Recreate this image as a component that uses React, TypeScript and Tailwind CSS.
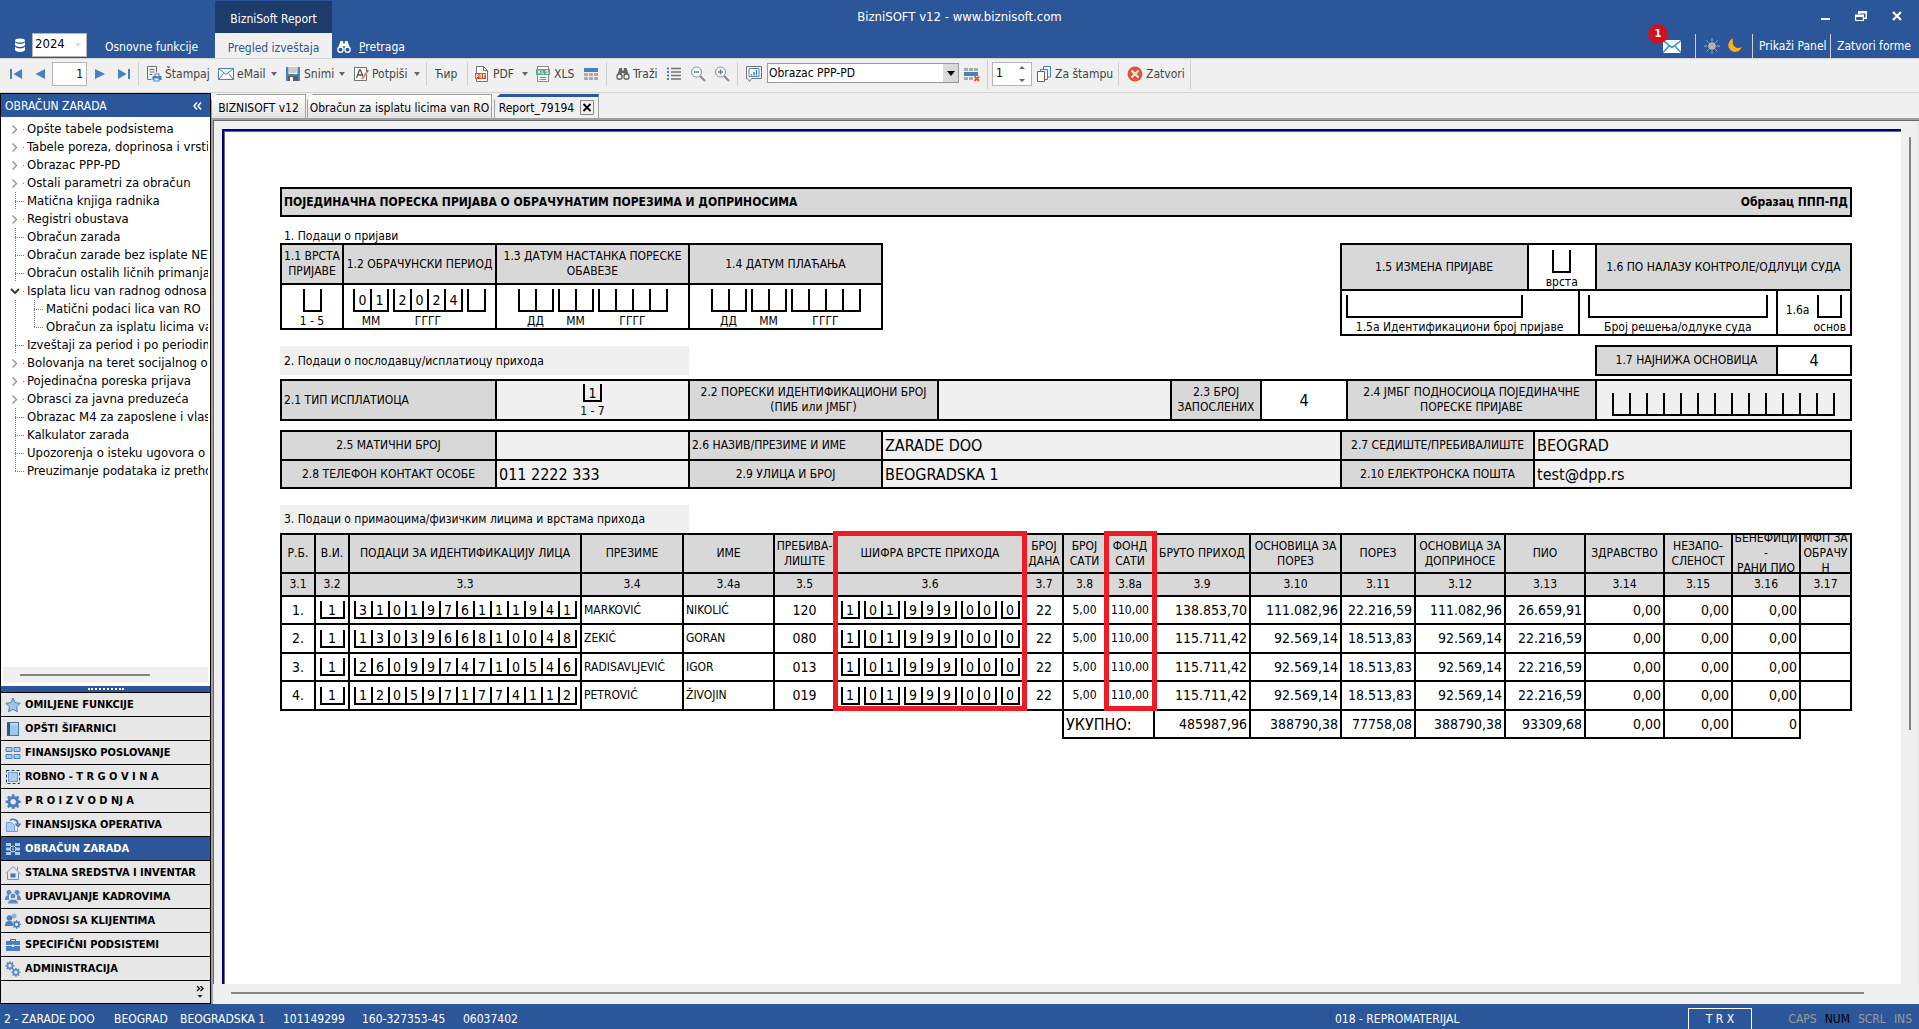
import React from 'react'
import clsx from 'clsx'

type IconProps = { className?: string }

const treeItems = [
  { label: 'Opšte tabele podsistema', kind: 'closed' },
  { label: 'Tabele poreza, doprinosa i vrsti', kind: 'closed' },
  { label: 'Obrazac PPP-PD', kind: 'closed' },
  { label: 'Ostali parametri za obračun', kind: 'closed' },
  { label: 'Matična knjiga radnika', kind: 'leaf' },
  { label: 'Registri obustava', kind: 'closed' },
  { label: 'Obračun zarada', kind: 'leaf' },
  { label: 'Obračun zarade bez isplate NET', kind: 'leaf' },
  { label: 'Obračun ostalih ličnih primanja', kind: 'leaf' },
  { label: 'Isplata licu van radnog odnosa', kind: 'open' },
  { label: 'Matični podaci lica van RO', kind: 'child' },
  { label: 'Obračun za isplatu licima va', kind: 'lastChild' },
  { label: 'Izveštaji za period i po periodim', kind: 'leaf' },
  { label: 'Bolovanja na teret socijalnog os', kind: 'closed' },
  { label: 'Pojedinačna poreska prijava', kind: 'closed' },
  { label: 'Obrasci za javna preduzeća', kind: 'closed' },
  { label: 'Obrazac M4 za zaposlene i vlas', kind: 'leaf' },
  { label: 'Kalkulator zarada', kind: 'leaf' },
  { label: 'Upozorenja o isteku ugovora o r', kind: 'leaf' },
  { label: 'Preuzimanje podataka iz pretho', kind: 'last' },
]

const gear = 'M8 1.2l1.2 0 .4 2 1.5.6 1.7-1.1 1.5 1.5-1.1 1.7.6 1.5 2 .4v2l-2 .4-.6 1.5 1.1 1.7-1.5 1.5-1.7-1.1-1.5.6-.4 2h-2l-.4-2-1.5-.6-1.7 1.1-1.5-1.5 1.1-1.7-.6-1.5-2-.4v-2l2-.4.6-1.5-1.1-1.7 1.5-1.5 1.7 1.1 1.5-.6.4-2zM8.2 6a2.8 2.8 0 1 0 .01 0z'

const groups = [
  {
    label: 'OMILJENE FUNKCIJE',
    icon: <path d="M8 1l2.2 4.7 5 .6-3.7 3.5 1 5L8 12.3l-4.5 2.5 1-5L.8 6.3l5-.6z" fill="#9cc5ea" stroke="#4f7fb5" />,
  },
  {
    label: 'OPŠTI ŠIFARNICI',
    icon: (
      <>
        <rect x="2.5" y="1.5" width="11" height="13" fill="#9fcaf0" stroke="#4778ad" />
        <path d="M2 1.5h3v13H2z" fill="#34567d" />
        <path d="M6 3h7" stroke="#d8ecfb" />
      </>
    ),
  },
  {
    label: 'FINANSIJSKO POSLOVANJE',
    icon: (
      <g fill="#a9c9e6" stroke="#4f83b9">
        <path d="M1 2.5h6v4H1zM9 2.5h6v4H9zM1 9.5h6v4H1zM9 9.5h6v4H9z" />
      </g>
    ),
  },
  {
    label: 'ROBNO - T R G O V I N A',
    icon: (
      <>
        <rect x="3.5" y="3.5" width="9" height="9" fill="#a9cdf0" stroke="#6a9fd6" />
        <rect x="1.5" y="1.5" width="13" height="13" fill="none" stroke="#24405f" strokeDasharray="3 2" />
      </>
    ),
  },
  { label: 'P R O I Z V O D NJ A', icon: <path d={gear} fill="#4a80bd" fillRule="evenodd" /> },
  {
    label: 'FINANSIJSKA OPERATIVA',
    icon: (
      <>
        <path d="M1.5 5.5h5l3 3v6h-8z" fill="#a9cdf0" stroke="#6a9fd6" />
        <path d="M5 3.5c3-2.500 8-1 8 4M10.500 6.500l2.500 3 2.500-3" fill="none" stroke="#3f76b3" strokeWidth="1.500" />
        <path d="M9.500 14.500h3v-3" fill="none" stroke="#6a9fd6" />
      </>
    ),
  },
  {
    label: 'OBRAČUN ZARADA',
    active: true,
    icon: (
      <>
        <path d="M1 2h5v3H1zM1 6.500h4v3H1zM1 11h5v3H1zM10 2h5v3h-5zM11 6.500h4v3h-4zM10 11h5v3h-5z" fill="#a9cdf0" />
        <circle cx="8" cy="8" r="3" fill="#2b579a" stroke="#cfe3f7" />
        <path d="M8 6.500v3" stroke="#cfe3f7" />
      </>
    ),
  },
  {
    label: 'STALNA SREDSTVA I INVENTAR',
    icon: (
      <>
        <path d="M1 8.500L8 1.500l7 7M2.500 7.500v7h11v-7M12.500 5V1.500" fill="none" stroke="#6c93bd" />
        <path d="M5.500 8.500h5v4h-5z" fill="#3f76b3" />
      </>
    ),
  },
  {
    label: 'UPRAVLJANJE KADROVIMA',
    icon: (
      <g fill="#5b8cc2">
        <circle cx="4" cy="3.500" r="2.500" />
        <circle cx="12" cy="3.500" r="2.500" />
        <path d="M0 11c0-4 2-5 4-5v5zM16 11c0-4-2-5-4-5v5z" />
        <circle cx="8" cy="7" r="3" stroke="#e7e7e7" />
        <path d="M2.500 15c0-3 2-5 5.500-5s5.500 2 5.500 5z" stroke="#e7e7e7" />
      </g>
    ),
  },
  {
    label: 'ODNOSI SA KLIJENTIMA',
    icon: (
      <g fill="#4a80bd">
        <circle cx="9" cy="3" r="2.500" fill="#8fb5dc" />
        <circle cx="4.500" cy="5" r="2.800" />
        <path d="M0 13c0-4 1.500-5 4.500-5S8 9 8 13z" />
        <g transform="translate(7 6.500) scale(.56)">
          <path d={gear} fillRule="evenodd" />
        </g>
      </g>
    ),
  },
  {
    label: 'SPECIFIČNI PODSISTEMI',
    icon: (
      <>
        <path d="M1 4h14v4H1zM1 9h14v5H1z" fill="#4a80bd" />
        <path d="M5.500 4V2.500h5V4" fill="none" stroke="#35608f" />
        <path d="M7 7.500h2v2.500H7z" fill="#e7e7e7" />
      </>
    ),
  },
  {
    label: 'ADMINISTRACIJA',
    icon: (
      <g fill="#5b8cc2" fillRule="evenodd">
        <g transform="translate(0 -.5) scale(.6)">
          <path d={gear} />
        </g>
        <g transform="translate(6 6) scale(.6)">
          <path d={gear} />
        </g>
      </g>
    ),
  },
]

const columns = [
  { title: 'Р.Б.', code: '3.1', width: 'w-[34px]' },
  { title: 'В.И.', code: '3.2', width: 'w-[34px]' },
  { title: 'ПОДАЦИ ЗА ИДЕНТИФИКАЦИЈУ ЛИЦА', code: '3.3', width: 'w-[232px]' },
  { title: 'ПРЕЗИМЕ', code: '3.4', width: 'w-[102px]' },
  { title: 'ИМЕ', code: '3.4a', width: 'w-[91px]' },
  { title: 'ПРЕБИВА-\nЛИШТЕ', code: '3.5', width: 'w-[61px]' },
  { title: 'ШИФРА ВРСТЕ ПРИХОДА', code: '3.6', width: 'w-[190px]' },
  { title: 'БРОЈ\nДАНА', code: '3.7', width: 'w-[38px]' },
  { title: 'БРОЈ\nСАТИ', code: '3.8', width: 'w-[43px]' },
  { title: 'ФОНД\nСАТИ', code: '3.8a', width: 'w-[48px]' },
  { title: 'БРУТО ПРИХОД', code: '3.9', width: 'w-[96px]' },
  { title: 'ОСНОВИЦА ЗА\nПОРЕЗ', code: '3.10', width: 'w-[91px]' },
  { title: 'ПОРЕЗ', code: '3.11', width: 'w-[74px]' },
  { title: 'ОСНОВИЦА ЗА\nДОПРИНОСЕ', code: '3.12', width: 'w-[90px]' },
  { title: 'ПИО', code: '3.13', width: 'w-[80px]' },
  { title: 'ЗДРАВСТВО', code: '3.14', width: 'w-[79px]' },
  { title: 'НЕЗАПО-\nСЛЕНОСТ', code: '3.15', width: 'w-[68px]' },
  { title: 'БЕНЕФИЦИ\n-\nРАНИ ПИО', code: '3.16', width: 'w-[68px]' },
  { title: 'МФП ЗА\nОБРАЧУ\nН', code: '3.17', width: 'w-[51px]' },
]

const people = [
  {
    id: '3101976111941', surname: 'MARKOVIĆ', name: 'NIKOLIĆ', place: '120',
    amounts: ['138.853,70', '111.082,96', '22.216,59', '111.082,96', '26.659,91', '0,00', '0,00', '0,00', ''],
  },
  {
    id: '1303966810048', surname: 'ZEKIĆ', name: 'GORAN', place: '080',
    amounts: ['115.711,42', '92.569,14', '18.513,83', '92.569,14', '22.216,59', '0,00', '0,00', '0,00', ''],
  },
  {
    id: '2609974710546', surname: 'RADISAVLJEVIĆ', name: 'IGOR', place: '013',
    amounts: ['115.711,42', '92.569,14', '18.513,83', '92.569,14', '22.216,59', '0,00', '0,00', '0,00', ''],
  },
  {
    id: '1205971774112', surname: 'PETROVIĆ', name: 'ŽIVOJIN', place: '019',
    amounts: ['115.711,42', '92.569,14', '18.513,83', '92.569,14', '22.216,59', '0,00', '0,00', '0,00', ''],
  },
]

const totals = ['485987,96', '388790,38', '77758,08', '388790,38', '93309,68', '0,00', '0,00', '0']

function Svg({ className, children }: IconProps & { children: React.ReactNode }) {
  return (
    <svg viewBox="0 0 16 16" className={clsx('h-4 w-4 shrink-0', className)} aria-hidden="true">
      {children}
    </svg>
  )
}

function Binoculars({ className }: IconProps) {
  return (
    <Svg className={className}>
      <path d="M4 1h3v3h2V1h3l2.500 7.500h-5V7h-3v1.500h-5z" fill="currentColor" />
      <circle cx="4" cy="11" r="3" fill="none" stroke="currentColor" strokeWidth="1.500" />
      <circle cx="12" cy="11" r="3" fill="none" stroke="currentColor" strokeWidth="1.500" />
    </Svg>
  )
}

function Caret({ className }: IconProps) {
  return (
    <svg viewBox="0 0 6 4" className={clsx('h-1 w-1.5 shrink-0', className)} aria-hidden="true">
      <path d="M0 0h6L3 4z" fill="currentColor" />
    </svg>
  )
}

function Separator() {
  return <div className="h-6 w-px shrink-0 bg-[#d0d0d0]" />
}

function ToolButton({ icon, label, caret, className }: { icon?: React.ReactNode; label?: string; caret?: boolean; className?: string }) {
  return (
    <button className={clsx('flex h-6 shrink-0 items-center gap-[3px] whitespace-nowrap text-[#444]', className)}>
      {icon}
      {label}
      {caret && <Caret className="ml-auto text-[#666]" />}
    </button>
  )
}

function NavArrow({ d, name }: { d: string; name: string }) {
  return (
    <button aria-label={name} className="flex h-6 w-[21px] shrink-0 items-center justify-center">
      <Svg>
        <path d={d} fill="#4a80bd" />
      </Svg>
    </button>
  )
}

function TitleBar() {
  return (
    <header className="flex h-[58px] shrink-0 bg-[#2b579a] text-white">
      <div className="flex w-[215px] shrink-0 items-end">
        <Svg className="mb-[5px] ml-[12px]">
          <g fill="#fff">
            <ellipse cx="8" cy="3.500" rx="5" ry="2" />
            <path d="M3 5c1 2.500 9 2.500 10 0v3c-1 2.500-9 2.500-10 0zM3 9.500c1 2.500 9 2.500 10 0V13c-1 2.500-9 2.500-10 0z" />
          </g>
        </Svg>
        <div className="relative mb-px ml-1 h-6 w-[55px]">
          <select aria-label="Godina" className="h-full w-full appearance-none border border-[#b5b5b5] bg-white px-[2px] pb-[3px] text-[13px] text-black">
            <option>2024</option>
          </select>
          <Caret className="absolute top-2.5 right-1.5 text-[#ddd]" />
        </div>
        <a href="#osnovne" className="mb-[3px] ml-[18px] whitespace-nowrap">Osnovne funkcije</a>
      </div>
      <div className="flex w-[117px] shrink-0 flex-col pt-px text-center">
        <div className="flex h-8 items-center justify-center bg-[#1e3c6b] pt-1">BizniSoft Report</div>
        <a href="#pregled" className="flex flex-1 items-center justify-center bg-[#f0f0f0] pt-1 text-[#2b579a]">Pregled izveštaja</a>
      </div>
      <a href="#pretraga" className="flex shrink-0 items-center gap-2 self-end pb-[3px] pl-[5px]">
        <Binoculars className="h-[14px] w-[14px]" />
        <span><u>P</u>retraga</span>
      </a>
      <h1 className="flex-1 pt-[9px] pr-[149px] text-center text-[13px]">BizniSOFT v12 - www.biznisoft.com</h1>
      <div className="flex w-[256px] shrink-0 flex-col">
        <div className="flex h-[34px] items-start justify-end gap-[20px] pt-[9px] pr-[14px]">
          <button aria-label="Umanji"><Svg><path d="M4 9h9v2H4z" fill="#fff" /></Svg></button>
          <button aria-label="Vrati">
            <Svg>
              <path d="M5 2h9v8h-3V8.500h1.500v-4H6.500V5H5zM2 5.500h9V12H2zM3.200 8v3h6.600V8z" fill="#fff" fillRule="evenodd" />
            </Svg>
          </button>
          <button aria-label="Zatvori"><Svg><path d="M4 3l8 8M12 3l-8 8" stroke="#fff" strokeWidth="2.200" /></Svg></button>
        </div>
        <div className="flex h-6 items-stretch whitespace-nowrap">
          <button aria-label="Poruke" className="relative w-[32px] shrink-0">
            <svg viewBox="0 0 18 13" className="h-[13px] w-[18px]" aria-hidden="true">
              <path d="M0 0h18v13H0z" fill="#fff" />
              <path d="M0 .5l9 7 9-7M0 12.500l6-6.500M18 12.500L12 6" fill="none" stroke="#2a8bd8" strokeWidth="1.400" />
            </svg>
            <span className="absolute -top-2.5 -left-[15px] flex h-5 w-5 items-center justify-center rounded-full bg-[#d0111f] text-[11px] font-bold">1</span>
          </button>
          <div className="flex w-[57px] shrink-0 items-center gap-[6px] border-l border-[#d0d0d0] px-2">
            <Svg>
              <path d="M8 0v16M0 8h16M2.500 2.500l11 11M13.500 2.500l-11 11" stroke="#a9b3c2" />
              <circle cx="8" cy="8" r="4.800" fill="#2b579a" />
              <circle cx="8" cy="8" r="3.800" fill="#b3b3b3" />
            </Svg>
            <Svg><path d="M6 2a6 6 0 1 0 8 8.500C9 12 5 7 6 2z" fill="#ffb117" stroke="#ffb117" strokeWidth="1.500" /></Svg>
          </div>
          <a href="#panel" className="flex w-[78px] shrink-0 items-center border-l border-[#d0d0d0] pl-1.5">Prikaži Panel</a>
          <a href="#forme" className="flex items-center border-l border-[#d0d0d0] pl-1.5">Zatvori forme</a>
        </div>
      </div>
    </header>
  )
}

function Toolbar() {
  return (
    <div className="flex h-[35px] shrink-0 items-center border-y border-[#d2d2d2] bg-[#f0f0f0] pb-[3px] pl-[5px]">
      <NavArrow name="Prva" d="M2 3h2v10H2zM14 3v10L5.500 8z" />
      <div className="w-[3px]" />
      <NavArrow name="Prethodna" d="M13 3v10L3.500 8z" />
      <input aria-label="Strana" defaultValue="1" className="ml-0.5 h-6 w-[35px] shrink-0 border border-[#b5b5b5] bg-white pr-[3px] text-right text-black" />
      <div className="w-[2px]" />
      <NavArrow name="Sledeća" d="M3 3v10l10-5z" />
      <div className="w-[3px]" />
      <NavArrow name="Poslednja" d="M2 3v10l8.500-5zM12 3h2v10h-2z" />
      <div className="w-[4px]" />
      <Separator />
      <ToolButton
        className="ml-[7px] w-[72px]"
        label="Štampaj"
        icon={
          <Svg>
            <path d="M1.500 13.500V.5h9v6M3.500 3.500h5M3.500 6h5M3.500 8.500h3M1.500 13.500h4" fill="none" stroke="#737373" />
            <path d="M8.500 7.500h5V10h2v4h-2v1.500h-6V14h-1v-4h2z" fill="#4a80bd" />
            <path d="M9.500 8.500h3V10h-3zM8.500 12.500h4v2h-4z" fill="#fff" />
          </Svg>
        }
      />
      <ToolButton
        className="w-[59px]"
        label="eMail"
        caret
        icon={
          <Svg>
            <path d="M.5 2.500h15v11H.5zl7.500 6 7.500-6M.5 13.500l5-6M15.500 13.500l-5-6" fill="#fff" stroke="#4a80bd" />
          </Svg>
        }
      />
      <ToolButton
        className="ml-[8px] w-[60px]"
        label="Snimi"
        caret
        icon={
          <Svg>
            <path d="M1 1h14v14H1z" fill="#4a80bd" />
            <path d="M3.500 0h9v8h-9z" fill="#fff" />
            <path d="M4 2h8M4 4h8M4 6h8" stroke="#999" />
            <path d="M3 10h10v5H3z" fill="#5c5c5c" />
            <path d="M5 11h3v4H5z" fill="#eee" />
          </Svg>
        }
      />
      <ToolButton
        className="ml-[8px] w-[67px]"
        label="Potpiši"
        caret
        icon={
          <Svg>
            <path d="M1.500 1.500h12v13h-12z" fill="#fff" stroke="#737373" />
            <path d="M3.500 12l3-8h1l3 8M5 9h4" fill="none" stroke="#555" strokeWidth="1.300" />
            <path d="M9 13l5-7" stroke="#e8926d" strokeWidth="2.200" />
            <path d="M14 6l1-2" stroke="#4a80bd" strokeWidth="2" />
          </Svg>
        }
      />
      <div className="w-[6px]" />
      <Separator />
      <ToolButton className="ml-[8px] w-[32px]" label="Ћир" />
      <Separator />
      <ToolButton
        className="ml-[6px] w-[54px]"
        label="PDF"
        caret
        icon={
          <Svg>
            <path d="M2.500.5h7l4 4v11h-11zM9.500.5v4h4" fill="#fff" stroke="#737373" />
            <path d="M1 7h11v6H1z" fill="#db4a2b" />
            <path d="M2.500 12V8.500h1.500v2H2.500M6 8.500v3h1.500v-3zM9.500 12V8.500h2M9.500 10h1.500" fill="none" stroke="#fff" strokeWidth=".8" />
          </Svg>
        }
      />
      <ToolButton
        className="ml-[7px] w-[48px]"
        label="XLS"
        icon={
          <Svg>
            <path d="M2.500 15.500v-15h11v15zM4.500 11.500h7M4.500 13.500h7" fill="#fff" stroke="#8a8a8a" />
            <path d="M1 3h14v6H1z" fill="#5fa98b" />
            <path d="M3 4.500l2 3M5 4.500l-2 3M7 4.500v3h2M13 4.500h-2V6h2v1.500h-2" fill="none" stroke="#fff" strokeWidth=".8" />
          </Svg>
        }
      />
      <ToolButton
        icon={
          <Svg>
            <path d="M1 2h14v4H1z" fill="#4a80bd" />
            <path d="M1 7h4v3H1zM6 7h4v3H6zM11 7h4v3h-4zM1 11h4v3H1zM6 11h4v3H6zM11 11h4v3h-4z" fill="#aaa" />
          </Svg>
        }
      />
      <div className="w-[7px]" />
      <Separator />
      <ToolButton className="ml-[9px] w-[50px]" label="Traži" icon={<Binoculars className="h-[14px] w-[14px] text-[#666]" />} />
      <ToolButton
        icon={
          <Svg>
            <path d="M5 2.500h10M5 6h10M5 9.500h10M5 13h10" stroke="#737373" strokeWidth="1.500" />
            <path d="M1 2.500h2M1 6h2M1 9.500h2M1 13h2" stroke="#4a80bd" strokeWidth="2" />
          </Svg>
        }
      />
      <ToolButton
        className="ml-[8px]"
        icon={
          <Svg>
            <circle cx="6.500" cy="6" r="5" fill="#fff" stroke="#888" />
            <path d="M10 10l5 5" stroke="#888" strokeWidth="2" />
            <path d="M4 6h5" stroke="#4a80bd" strokeWidth="1.500" />
          </Svg>
        }
      />
      <ToolButton
        className="ml-[8px]"
        icon={
          <Svg>
            <circle cx="6.500" cy="6" r="5" fill="#fff" stroke="#888" />
            <path d="M10 10l5 5" stroke="#888" strokeWidth="2" />
            <path d="M4 6h5M6.500 3.500v5" stroke="#4a80bd" strokeWidth="1.500" />
          </Svg>
        }
      />
      <div className="w-[7px]" />
      <Separator />
      <ToolButton
        className="ml-[8px]"
        icon={
          <Svg>
            <path d="M.5.500h15v12h-10l-2 3-2-3h-1z" fill="#fff" stroke="#737373" />
            <path d="M3 2.500h10v8H3z" fill="none" stroke="#4a80bd" />
            <path d="M5.500 9.500V8M8 9.500V6M10.500 9.500V4" stroke="#4a80bd" strokeWidth="1.500" />
          </Svg>
        }
      />
      <div className="relative mb-0.5 ml-[5px] h-5 w-[192px] shrink-0">
        <select aria-label="Izveštaj" className="h-full w-full appearance-none border border-[#999] bg-white px-px pb-px text-black">
          <option>Obrazac PPP-PD</option>
        </select>
        <span className="pointer-events-none absolute inset-y-px right-px flex w-[15px] items-center justify-center bg-[#dadada]">
          <svg viewBox="0 0 8 5" className="h-[5px] w-2" aria-hidden="true"><path d="M0 0h8L4 5z" /></svg>
        </span>
      </div>
      <ToolButton
        className="ml-[5px]"
        icon={
          <Svg>
            <path d="M0 2h4v3H0zM5 2h4v3H5zM10 2h4v3h-4zM0 11h4v3H0zM5 11h4v3H5z" fill="#aaa" />
            <path d="M0 6h14v4H0z" fill="#4a80bd" />
            <path d="M10.500 10.500l4.500 4.500M15 10.500L10.500 15" stroke="#d9573c" strokeWidth="1.800" />
          </Svg>
        }
      />
      <div className="ml-[7px] h-[29px] w-px shrink-0 bg-[#d0d0d0]" />
      <div className="relative ml-1 h-6 w-10 shrink-0">
        <input aria-label="Broj kopija" defaultValue="1" className="h-full w-full border border-[#b5b5b5] bg-white px-[3px] pb-[3px] text-black" />
        <svg viewBox="0 0 6 16" className="absolute top-1 right-[7px] h-4 w-1.5" aria-hidden="true">
          <path d="M3 0l3 3H0zM0 13h6l-3 3z" fill="#666" />
        </svg>
      </div>
      <ToolButton
        className="ml-[4px] w-[82px]"
        label="Za štampu"
        icon={
          <Svg>
            <path d="M1.500 5.500h7v10h-7z" fill="#fff" stroke="#666" />
            <path d="M4.500 5V3.500h7v10H9M7.500 3V.5h7v10.500H12" fill="none" stroke="#4a80bd" />
          </Svg>
        }
      />
      <Separator />
      <ToolButton
        className="ml-[8px] w-[63px]"
        label="Zatvori"
        icon={
          <Svg>
            <circle cx="8" cy="8" r="7.500" fill="#d9573c" />
            <path d="M4.500 4.500l7 7M11.500 4.500l-7 7" stroke="#f4e4df" strokeWidth="2.200" />
          </Svg>
        }
      />
      <div className="h-[29px] w-px shrink-0 bg-[#d0d0d0]" />
    </div>
  )
}

function Branch({ kind }: { kind: string }) {
  const child = kind === 'child' || kind === 'lastChild'
  return (
    <svg viewBox="0 0 45 18" className={clsx('h-[18px] shrink-0', child ? 'w-[45px]' : 'w-[26px]')} preserveAspectRatio="xMinYMin slice" aria-hidden="true">
      {(child || kind === 'leaf') && <path d="M14.500 0v18" stroke="#777" strokeDasharray="1 1" />}
      {kind === 'last' && <path d="M14.500 0v9" stroke="#777" strokeDasharray="1 1" />}
      {(kind === 'leaf' || kind === 'last') && <path d="M14 9.500h9" stroke="#777" strokeDasharray="1 1" />}
      {kind === 'child' && <path d="M33.500 0v18M33 9.500h9" stroke="#777" strokeDasharray="1 1" fill="none" />}
      {kind === 'lastChild' && <path d="M33.500 0v9M33 9.500h9" stroke="#777" strokeDasharray="1 1" fill="none" />}
      {kind === 'closed' && <path d="M11.500 5.500l4 4-4 4" fill="none" stroke="#999" strokeWidth="1.500" />}
      {kind === 'open' && <path d="M10 7l4 4 4-4" fill="none" stroke="#333" strokeWidth="1.800" />}
      {(kind === 'closed' || kind === 'open') && <path d="M22 9h1v1h-1z" fill="#777" />}
    </svg>
  )
}

function Sidebar() {
  return (
    <aside className="flex w-[211px] shrink-0 flex-col border border-black bg-white">
      <div className="flex h-[23px] shrink-0 items-center justify-between bg-[#2b579a] pr-2 pl-1 text-white">
        <h2>OBRAČUN ZARADA</h2>
        <svg viewBox="0 0 9 8" className="h-2 w-[9px]" aria-hidden="true">
          <path d="M4 .5L1 4l3 3.500M8 .5L5 4l3 3.500" fill="none" stroke="#fff" strokeWidth="1.500" />
        </svg>
      </div>
      <ul className="mr-0.5 min-h-0 flex-1 overflow-hidden pt-[3px] text-[13px] text-black">
        {treeItems.map((item) => (
          <li key={item.label} className="flex h-[18px] items-center whitespace-nowrap">
            <Branch kind={item.kind} />
            {item.label}
          </li>
        ))}
      </ul>
      <div className="mx-0.5 mb-[3px] h-4 shrink-0 bg-[#f0f0f0] pt-[7px] pl-[17px]">
        <div className="h-0.5 w-[130px] bg-[#858585]" />
      </div>
      <div className="flex h-1.5 shrink-0 items-center justify-center bg-[#2b579a]">
        <div className="w-9 border-t-2 border-dotted border-white" />
      </div>
      <nav className="shrink-0">
        {groups.map((group) => (
          <a
            key={group.label}
            href="#grupa"
            className={clsx(
              'flex h-6 items-center gap-1 border-t border-black pl-1 text-[11px] font-bold whitespace-nowrap',
              group.active ? 'bg-[#2b579a] text-white' : 'bg-[#e7e7e7] text-black',
            )}
          >
            <Svg>{group.icon}</Svg>
            {group.label}
          </a>
        ))}
      </nav>
      <button aria-label="Više" className="flex h-[23px] shrink-0 items-center justify-end border-t border-black bg-[#e7e7e7] pr-1.5">
        <svg viewBox="0 0 8 12" className="h-3 w-2" aria-hidden="true">
          <path d="M1 0l2.500 2.500L1 5M4.500 0L7 2.500 4.500 5" fill="none" stroke="#000" strokeWidth="1.300" />
          <path d="M1.500 9h5L4 11.500z" />
        </svg>
      </button>
    </aside>
  )
}

function Comb({ value, cell = 'w-[17px]', height = 'h-[23px]' }: { value: string; cell?: string; height?: string }) {
  return (
    <div className={clsx('inline-flex border-b-2 border-l-2 border-black text-[14px]', height)}>
      {value.split('').map((char, i) => (
        <span key={i} className={clsx('flex items-center justify-center border-r-2 border-black pt-px leading-none', cell)}>
          {char.trim()}
        </span>
      ))}
    </div>
  )
}

function LabeledComb({ value, label }: { value: string; label: string }) {
  return (
    <div className="flex flex-col items-center">
      <Comb value={value} />
      <span className="h-4 leading-[18px]">{label}</span>
    </div>
  )
}

const formTable = 'w-full table-fixed border-collapse text-center leading-[15px] [&_td]:border-2 [&_td]:border-black [&_th]:border-2 [&_th]:border-black [&_th]:bg-[#d8d8d8] [&_th]:font-normal'

function PeriodTable() {
  return (
    <div className="flex items-start justify-between">
      <div className="w-[38.3%]">
        <table className={formTable}>
          <colgroup>
            <col className="w-[62px]" />
            <col className="w-[153px]" />
            <col className="w-[193px]" />
            <col className="w-[193px]" />
          </colgroup>
          <tbody>
            <tr className="h-10">
              <th>1.1 ВРСТА<br />ПРИЈАВЕ</th>
              <th>1.2 ОБРАЧУНСКИ ПЕРИОД</th>
              <th>1.3 ДАТУМ НАСТАНКА ПОРЕСКЕ<br />ОБАВЕЗЕ</th>
              <th>1.4 ДАТУМ ПЛАЋАЊА</th>
            </tr>
            <tr className="h-[45px]">
              <td className="pt-1 align-top"><LabeledComb value=" " label="1 - 5" /></td>
              <td className="pt-1 align-top">
                <div className="flex justify-center gap-1">
                  <LabeledComb value="01" label="ММ" />
                  <LabeledComb value="2024" label="ГГГГ" />
                  <LabeledComb value=" " label="" />
                </div>
              </td>
              {['1.3', '1.4'].map((key) => (
                <td key={key} className="pt-1 align-top">
                  <div className="flex justify-center gap-1">
                    <LabeledComb value="  " label="ДД" />
                    <LabeledComb value="  " label="ММ" />
                    <LabeledComb value="    " label="ГГГГ" />
                  </div>
                </td>
              ))}
            </tr>
          </tbody>
        </table>
      </div>
      <div className="w-[32.6%]">
        <table className={formTable}>
          <colgroup>
            <col className="w-[187px]" />
            <col className="w-[51px]" />
            <col className="w-[17px]" />
            <col className="w-[181px]" />
            <col className="w-[74px]" />
          </colgroup>
          <tbody>
            <tr className="h-[46px]">
              <th>1.5 ИЗМЕНА ПРИЈАВЕ</th>
              <td colSpan={2} className="pt-[5px] align-top"><LabeledComb value=" " label="врста" /></td>
              <th colSpan={2}>1.6 ПО НАЛАЗУ КОНТРОЛЕ/ОДЛУЦИ СУДА</th>
            </tr>
            <tr className="h-[45px]">
              <td colSpan={2} className="pt-1 align-top">
                <div className="ml-1 h-[23px] w-3/4 border-x-2 border-b-2 border-black" />
                <div className="h-4 leading-[18px]">1.5a Идентификациони број пријаве</div>
              </td>
              <td colSpan={2} className="pt-1 align-top">
                <div className="mx-2 h-[23px] border-x-2 border-b-2 border-black" />
                <div className="h-4 leading-[18px]">Број решења/одлуке суда</div>
              </td>
              <td className="pt-1 align-top">
                <div className="flex justify-end gap-1 pr-1">
                  <span className="pt-2">1.6a</span>
                  <div className="flex flex-col items-center">
                    <Comb value=" " cell="w-[23px]" />
                    <span className="h-4 leading-[18px]">основ</span>
                  </div>
                </div>
              </td>
            </tr>
          </tbody>
        </table>
      </div>
    </div>
  )
}

function EmployerTables() {
  return (
    <>
      <div className="mt-[9px] flex items-start justify-between">
        <h3 className="mt-px flex h-[29px] w-[26%] items-center bg-[#f0f0f0] pl-1">2. Подаци о послодавцу/исплатиоцу прихода</h3>
        <div className="w-[16.35%]">
          <table className={formTable}>
            <colgroup>
              <col className="w-[181px]" />
              <col className="w-[74px]" />
            </colgroup>
            <tbody>
              <tr className="h-[29px]">
                <th>1.7 НАЈНИЖА ОСНОВИЦА</th>
                <td className="text-[16px]">4</td>
              </tr>
            </tbody>
          </table>
        </div>
      </div>
      <table className={clsx(formTable, 'mt-[3px]')}>
        <colgroup>
          <col className="w-[215px]" />
          <col className="w-[193px]" />
          <col className="w-[249px]" />
          <col className="w-[233px]" />
          <col className="w-[90px]" />
          <col className="w-[86px]" />
          <col className="w-[249px]" />
          <col className="w-[255px]" />
        </colgroup>
        <tbody>
          <tr className="h-10">
            <th className="pl-0.5 text-left">2.1 ТИП ИСПЛАТИОЦА</th>
            <td className="bg-[#f0f0f0]">
              <div className="flex flex-col items-center pt-[3px]">
                <Comb value="1" height="h-[18px]" />
                <span className="pt-0.5">1 - 7</span>
              </div>
            </td>
            <th>2.2 ПОРЕСКИ ИДЕНТИФИКАЦИОНИ БРОЈ<br />(ПИБ или ЈМБГ)</th>
            <td className="bg-[#f0f0f0]" />
            <th>2.3 БРОЈ<br />ЗАПОСЛЕНИХ</th>
            <td className="text-[16px]">4</td>
            <th>2.4 ЈМБГ ПОДНОСИОЦА ПОЈЕДИНАЧНЕ<br />ПОРЕСКЕ ПРИЈАВЕ</th>
            <td className="bg-[#f0f0f0]">
              <div className="flex justify-center pt-2">
                <Comb value="             " />
              </div>
            </td>
          </tr>
        </tbody>
      </table>
      <table className={clsx(formTable, 'mt-[9px] [&_td]:bg-[#f0f0f0] [&_td]:px-0.5 [&_td]:text-left [&_td]:text-[16px]')}>
        <colgroup>
          <col className="w-[215px]" />
          <col className="w-[193px]" />
          <col className="w-[193px]" />
          <col className="w-[459px]" />
          <col className="w-[193px]" />
          <col className="w-[317px]" />
        </colgroup>
        <tbody>
          <tr className="h-[29px]">
            <th>2.5 МАТИЧНИ БРОЈ</th>
            <td />
            <th className="pl-0.5 text-left">2.6 НАЗИВ/ПРЕЗИМЕ И ИМЕ</th>
            <td>ZARADE DOO</td>
            <th>2.7 СЕДИШТЕ/ПРЕБИВАЛИШТЕ</th>
            <td>BEOGRAD</td>
          </tr>
          <tr className="h-[28px]">
            <th>2.8 ТЕЛЕФОН КОНТАКТ ОСОБЕ</th>
            <td>011 2222 333</td>
            <th>2.9 УЛИЦА И БРОЈ</th>
            <td>BEOGRADSKA 1</td>
            <th>2.10 ЕЛЕКТРОНСКА ПОШТА</th>
            <td>test@dpp.rs</td>
          </tr>
        </tbody>
      </table>
    </>
  )
}

function IncomeTable() {
  return (
    <>
      <h3 className="mt-4 flex h-7 w-[26%] items-center bg-[#f0f0f0] pl-1">3. Подаци о примаоцима/физичким лицима и врстама прихода</h3>
      <div className="relative">
        <table className={formTable}>
          <colgroup>
            {columns.map((col) => (
              <col key={col.code} className={col.width} />
            ))}
          </colgroup>
          <thead>
            <tr className="h-[39px]">
              {columns.map((col) => (
                <th key={col.code}>
                  <div className="flex h-[37px] items-center justify-center overflow-hidden whitespace-pre">{col.title}</div>
                </th>
              ))}
            </tr>
            <tr className="h-[23px]">
              {columns.map((col) => (
                <th key={col.code}>{col.code}</th>
              ))}
            </tr>
          </thead>
          <tbody>
            {people.map((person, i) => (
              <tr key={person.id} className="h-7 text-[14px] even:h-[29px]">
                <td>{i + 1}.</td>
                <td><div className="flex justify-center"><Comb value="1" cell="w-[23px]" height="h-[18px]" /></div></td>
                <td><div className="flex justify-center"><Comb value={person.id} height="h-[18px]" /></div></td>
                <td className="px-0.5 text-left text-[12px] whitespace-nowrap">{person.surname}</td>
                <td className="px-0.5 text-left text-[12px]">{person.name}</td>
                <td>{person.place}</td>
                <td>
                  <div className="flex justify-center gap-1">
                    {['1', '01', '999', '00', '0'].map((part) => (
                      <Comb key={part} value={part} height="h-[18px]" />
                    ))}
                  </div>
                </td>
                <td>22</td>
                <td className="text-[12px]">5,00</td>
                <td className="text-[12px]">110,00</td>
                {person.amounts.map((amount, j) => (
                  <td key={j} className="px-0.5 text-right">{amount}</td>
                ))}
              </tr>
            ))}
            <tr className="h-7 text-[14px]">
              <td colSpan={8} className="border-x-0! border-b-0!" />
              <td colSpan={2} className="px-0.5 text-left text-[16px]">УКУПНО:</td>
              {totals.map((total, j) => (
                <td key={j} className="px-0.5 text-right">{total}</td>
              ))}
              <td className="border-r-0! border-b-0!" />
            </tr>
          </tbody>
        </table>
        {/* marked columns: 3.6 and 3.8a */}
        <div className="absolute -top-0.5 left-[35.2%] h-[180px] w-[12.3%] border-5 border-[#ee1c25]" />
        <div className="absolute -top-0.5 left-[52.4%] h-[180px] w-[3.4%] border-5 border-[#ee1c25]" />
      </div>
    </>
  )
}

function Report() {
  return (
    <div className="flex min-h-0 flex-1 flex-col border-t-2 border-l-2 border-[#a0a0a0] bg-[#f0f0f0]">
      <div className="flex min-h-0 flex-1 border-t border-l border-[#696969]">
        <div className="mt-2 ml-2 min-w-0 flex-1 overflow-hidden border-t-2 border-l-2 border-[#00007b]">
          <article className="h-full border-t border-l border-[#696969] bg-white pt-[55px] pr-[49px] pl-[55px] text-black">
            <div className="flex h-[30px] items-center justify-between border-2 border-black bg-[#d8d8d8] px-0.5 text-[12px] font-bold">
              <h2>ПОЈЕДИНАЧНА ПОРЕСКА ПРИЈАВА О ОБРАЧУНАТИМ ПОРЕЗИМА И ДОПРИНОСИМА</h2>
              <span>Образац ППП-ПД</span>
            </div>
            <h3 className="mt-2 h-[18px] pl-1 leading-[22px]">1. Подаци о пријави</h3>
            <PeriodTable />
            <EmployerTables />
            <IncomeTable />
          </article>
        </div>
        <div className="flex w-[18px] shrink-0 justify-center border-r border-[#e3e3e3] pt-4">
          <div className="h-[70%] w-0.5 bg-[#858585]" />
        </div>
      </div>
      <div className="flex h-5 shrink-0 items-center pr-[55px] pb-0.5 pl-[18px]">
        <div className="h-0.5 flex-1 bg-[#858585]" />
      </div>
    </div>
  )
}

function Tab({ label, active, className }: { label: string; active?: boolean; className?: string }) {
  return (
    <button
      role="tab"
      aria-selected={!!active}
      className={clsx(
        'flex h-6 shrink-0 items-center gap-1.5 border-r border-l border-[#a0a0a0] whitespace-nowrap text-black [clip-path:polygon(6px_0,100%_0,100%_100%,0_100%,0_6px)]',
        active ? 'border-t-3 border-t-[#2b579a] bg-[#f0f0f0]' : 'border-t bg-linear-to-b from-white to-[#e4e4e4] pt-0.5',
        className,
      )}
    >
      {label}
      {active && (
        <svg viewBox="0 0 14 15" className="h-[15px] w-3.5" aria-hidden="true">
          <path d="M.5.500h13v14H.5z" fill="#f0f0f0" stroke="#888" />
          <path d="M3.500 4l7 7M10.500 4l-7 7" stroke="#000" strokeWidth="1.800" />
        </svg>
      )}
    </button>
  )
}

function StatusBar() {
  return (
    <footer className="flex h-[25px] shrink-0 items-center bg-[#2b579a] pt-1 whitespace-nowrap text-white">
      <div className="flex flex-1 pl-1">
        <span className="w-[110px]">2 - ZARADE DOO</span>
        <span className="w-[66px]">BEOGRAD</span>
        <span className="w-[103px]">BEOGRADSKA 1</span>
        <span className="w-[79px]">101149299</span>
        <span className="w-[101px]">160-327353-45</span>
        <span>06037402</span>
      </div>
      <div className="w-[358px] shrink-0 border-l border-[#244c8a] pl-1">018 - REPROMATERIJAL</div>
      <div className="flex h-[22px] w-16 shrink-0 items-center justify-center border border-white">T R X</div>
      <div className="flex w-[167px] shrink-0 justify-end gap-2 pr-[7px] text-[#9a9a9a]">
        <span>CAPS</span>
        <span className="text-black">NUM</span>
        <span>SCRL</span>
        <span>INS</span>
      </div>
    </footer>
  )
}

function App() {
  return (
    <div className="flex h-screen flex-col overflow-hidden bg-[#f0f0f0] font-['DejaVu_Sans_Condensed','DejaVu_Sans',sans-serif] text-[12px] leading-4">
      <TitleBar />
      <Toolbar />
      <div className="flex min-h-0 flex-1">
        <Sidebar />
        <main className="flex min-w-0 flex-1 flex-col">
          <div role="tablist" className="flex pt-px">
            <Tab label="BIZNISOFT v12" className="w-[95px] justify-center" />
            <Tab label="Obračun za isplatu licima van RO" className="ml-px w-[185px] justify-center" />
            <Tab label="Report_79194" active className="ml-0.5 w-[105px] justify-center" />
          </div>
          <Report />
        </main>
      </div>
      <StatusBar />
    </div>
  )
}

export default App
